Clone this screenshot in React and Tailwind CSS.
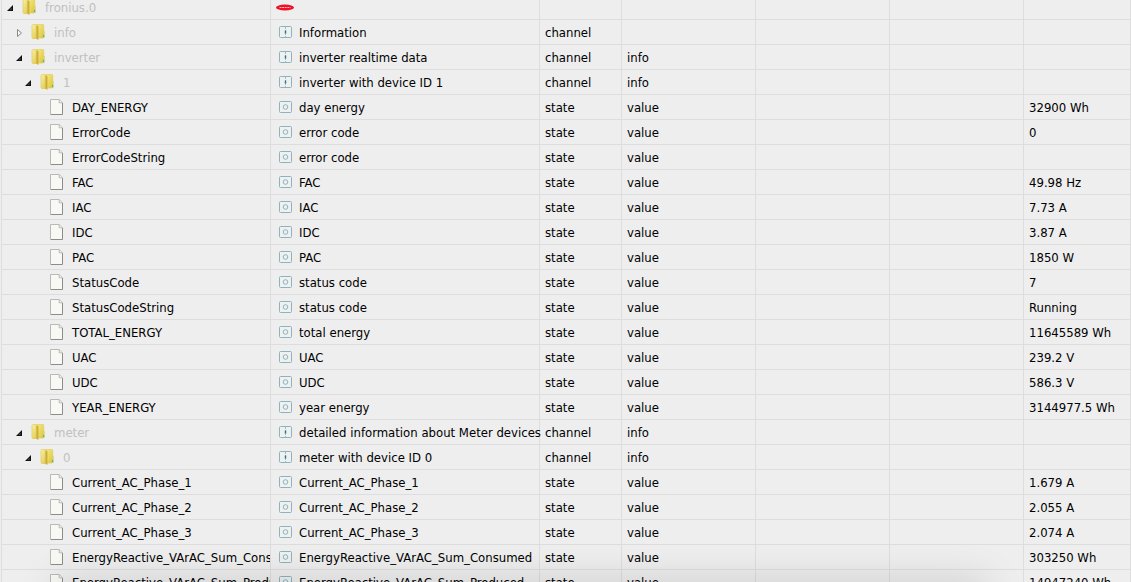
const rows = [
  { level: 0, name: 'fronius.0', kind: 'adapter', open: true },
  { level: 1, name: 'info', kind: 'channel', title: 'Information', role: '', open: false },
  { level: 1, name: 'inverter', kind: 'channel', title: 'inverter realtime data', role: 'info', open: true },
  { level: 2, name: '1', kind: 'channel', title: 'inverter with device ID 1', role: 'info', open: true },
  { level: 3, name: 'DAY_ENERGY', kind: 'state', title: 'day energy', role: 'value', value: '32900 Wh' },
  { level: 3, name: 'ErrorCode', kind: 'state', title: 'error code', role: 'value', value: '0' },
  { level: 3, name: 'ErrorCodeString', kind: 'state', title: 'error code', role: 'value', value: '' },
  { level: 3, name: 'FAC', kind: 'state', title: 'FAC', role: 'value', value: '49.98 Hz' },
  { level: 3, name: 'IAC', kind: 'state', title: 'IAC', role: 'value', value: '7.73 A' },
  { level: 3, name: 'IDC', kind: 'state', title: 'IDC', role: 'value', value: '3.87 A' },
  { level: 3, name: 'PAC', kind: 'state', title: 'PAC', role: 'value', value: '1850 W' },
  { level: 3, name: 'StatusCode', kind: 'state', title: 'status code', role: 'value', value: '7' },
  { level: 3, name: 'StatusCodeString', kind: 'state', title: 'status code', role: 'value', value: 'Running' },
  { level: 3, name: 'TOTAL_ENERGY', kind: 'state', title: 'total energy', role: 'value', value: '11645589 Wh' },
  { level: 3, name: 'UAC', kind: 'state', title: 'UAC', role: 'value', value: '239.2 V' },
  { level: 3, name: 'UDC', kind: 'state', title: 'UDC', role: 'value', value: '586.3 V' },
  { level: 3, name: 'YEAR_ENERGY', kind: 'state', title: 'year energy', role: 'value', value: '3144977.5 Wh' },
  { level: 1, name: 'meter', kind: 'channel', title: 'detailed information about Meter devices', role: 'info', open: true },
  { level: 2, name: '0', kind: 'channel', title: 'meter with device ID 0', role: 'info', open: true },
  { level: 3, name: 'Current_AC_Phase_1', kind: 'state', title: 'Current_AC_Phase_1', role: 'value', value: '1.679 A' },
  { level: 3, name: 'Current_AC_Phase_2', kind: 'state', title: 'Current_AC_Phase_2', role: 'value', value: '2.055 A' },
  { level: 3, name: 'Current_AC_Phase_3', kind: 'state', title: 'Current_AC_Phase_3', role: 'value', value: '2.074 A' },
  { level: 3, name: 'EnergyReactive_VArAC_Sum_Consumed', kind: 'state', title: 'EnergyReactive_VArAC_Sum_Consumed', role: 'value', value: '303250 Wh' },
  { level: 3, name: 'EnergyReactive_VArAC_Sum_Produced', kind: 'state', title: 'EnergyReactive_VArAC_Sum_Produced', role: 'value', value: '14947240 Wh' },
];

const indents = ['pl-1', 'pl-[13px]', 'pl-[22px]', 'pl-[31px]'];

function Expander({ open, name }) {
  return (
    <button type="button" aria-label={`Toggle ${name}`} aria-expanded={open} className="size-4 shrink-0">
      <svg viewBox="0 0 16 16" className="size-4">
        {open ? (
          <>
            <path d="M7 6V12H1z" fill="#111" />
            <path d="M5.5 9v1.8H3.7z" fill="#666" />
          </>
        ) : (
          <path d="M2.5 5.5v7l4-3.5z" fill="#f8f8f8" stroke="#8a8a8a" />
        )}
      </svg>
    </button>
  );
}

function FolderIcon() {
  return (
    <svg viewBox="0 0 16 16" className="size-4 shrink-0">
      <defs>
        <linearGradient id="folderBack" x1="0" y1="0" x2="1" y2="1">
          <stop offset="0" stopColor="#f9f3a8" />
          <stop offset="1" stopColor="#dcc03e" />
        </linearGradient>
        <linearGradient id="folderFront" x1="0" y1="0" x2="1" y2="1">
          <stop offset="0" stopColor="#f5ea88" />
          <stop offset="1" stopColor="#dfc437" />
        </linearGradient>
      </defs>
      <path d="M11.5 7.5h2v6h-2z" fill="#edf2dc" stroke="#d9c766" strokeWidth=".6" />
      <path d="M6 .5h6.2l.6.6v12.4l-.6.6H6z" fill="url(#folderFront)" stroke="#dfca5c" strokeWidth=".6" />
      <path d="M1 1.2l.6-.6h3.6l2 1.4v13.5l-2-1H1.6l-.6-.6z" fill="url(#folderBack)" stroke="#dcc552" strokeWidth=".6" />
      <path d="M5.4 1.6l1.8.8v13l-1.8-.9z" fill="#cbad38" />
      <path d="M11.9 10.8h1.2V13h-1.2z" fill="#35bfc6" />
    </svg>
  );
}

function PageIcon() {
  return (
    <svg viewBox="0 0 16 16" className="size-4 shrink-0">
      <path d="M1.5.5h8.7l3.3 3.3v11.7h-12z" fill="#f8f9f5" />
      <path d="M1.5 15V.5h8.7l3.3 3.3" fill="none" stroke="#b9b9b6" />
      <path d="M13.5 3.8v11.7h-12" fill="none" stroke="#8c8c89" />
      <path d="M10.2.8v3h3" fill="#f1f1ee" stroke="#b9b9b6" />
    </svg>
  );
}

function KindIcon({ kind }) {
  if (kind === 'adapter') {
    return (
      <svg viewBox="0 0 18 7" className="-ml-[3px] h-[7px] w-[18px] shrink-0">
        <ellipse cx="9" cy="3.5" rx="9" ry="3" fill="#ee1226" />
        <path d="M3.5 3.5h11" stroke="#ffb9bd" strokeDasharray="2 .6" />
      </svg>
    );
  }
  return (
    <svg viewBox="0 0 13 12" fill="none" className="h-3 w-[13px] shrink-0">
      <rect x=".5" y=".5" width="12" height="11" rx="1" fill="#eff1f1" stroke="#8db3bf" />
      {kind === 'channel' ? (
        <>
          <path d="M6.5 1v10" stroke="#9fbcc4" strokeDasharray="2 1" />
          <path d="M6.5 4.5v3" stroke="#2e7184" strokeWidth="1.4" />
        </>
      ) : (
        <circle cx="6.5" cy="6" r="2.3" stroke="#8fb2bd" />
      )}
    </svg>
  );
}

function Cell({ children }) {
  return <td className="h-[25px] truncate border-r border-b border-[#ddd] p-0 pt-0.5 pl-[5px]">{children}</td>;
}

function Row({ row }) {
  const isState = row.kind === 'state';

  return (
    <tr>
      <td className="h-[25px] border-x border-b border-[#ddd] p-0">
        <div className={`flex items-center overflow-hidden ${indents[row.level]}`}>
          {isState ? <span className="size-4 shrink-0" /> : <Expander open={row.open} name={row.name} />}
          {isState ? <PageIcon /> : <FolderIcon />}
          <span className={`ml-[7px] pt-0.5 whitespace-nowrap ${isState ? '' : 'text-[#c0c0c0]'}`}>{row.name}</span>
        </div>
      </td>
      <td className="h-[25px] border-r border-b border-[#ddd] p-0">
        <div className="flex items-center gap-[7px] pl-2">
          <KindIcon kind={row.kind} />
          <span className="pt-0.5 whitespace-nowrap">{row.title}</span>
        </div>
      </td>
      <Cell>{row.kind === 'adapter' ? '' : row.kind}</Cell>
      <Cell>{row.role}</Cell>
      <Cell />
      <Cell />
      <Cell>{row.value}</Cell>
    </tr>
  );
}

export default function App() {
  return (
    <main className="relative h-screen overflow-hidden bg-[#eee] pl-px font-['DejaVu_Sans_Condensed','DejaVu_Sans',sans-serif] text-[13px] leading-4 text-black">
      {/* list is scrolled a little, so the first row is cut */}
      <table className="-mt-[5px] w-full table-fixed border-separate border-spacing-0">
        <colgroup>
          <col className="w-[270px]" />
          <col className="w-[269px]" />
          <col className="w-[82px]" />
          <col className="w-[134px]" />
          <col className="w-[134px]" />
          <col className="w-[134px]" />
          <col />
        </colgroup>
        <tbody>
          {rows.map((row, i) => (
            <Row key={i} row={row} />
          ))}
        </tbody>
      </table>
      <div className="pointer-events-none absolute top-full right-36 left-14 h-10 shadow-[0_0_40px_rgba(0,0,0,0.15)]" />
    </main>
  );
}
